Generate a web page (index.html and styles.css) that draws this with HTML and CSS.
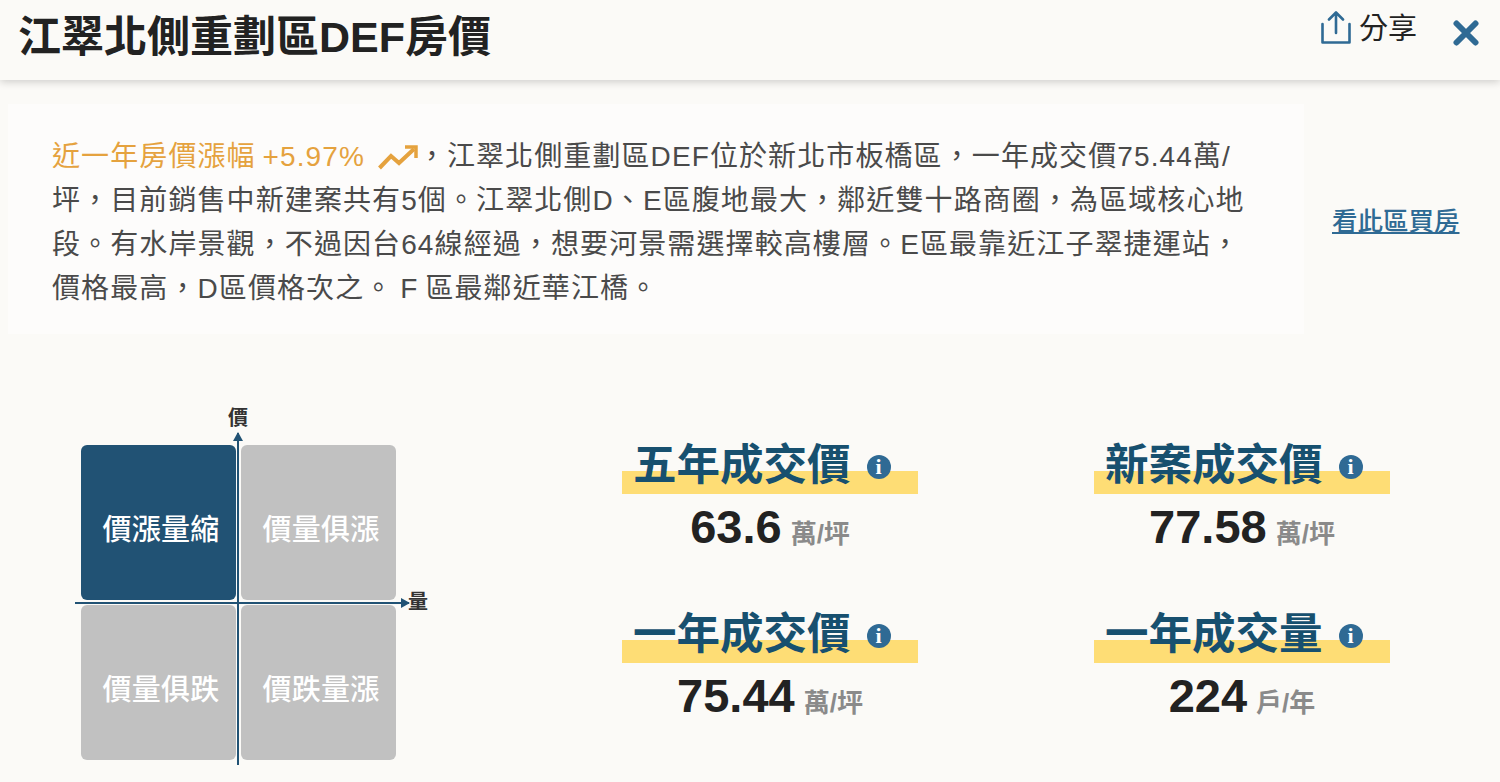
FILE: index.html
```html
<!DOCTYPE html>
<html lang="zh-Hant">
  <head>
    <meta charset="UTF-8">
    <meta name="viewport" content="width=device-width, initial-scale=1.0">
    <title>江翠北側重劃區DEF房價</title>
    <link rel="stylesheet" href="styles.css">
  </head>
  <body>
    <header class="top-bar">
      <h1>江翠北側重劃區DEF房價</h1>
      <div class="top-actions">
        <a class="share">
          <svg class="share-icon" viewBox="0 0 30 33" width="30" height="33" fill="none" stroke="#2f6a94" stroke-width="2.6" stroke-linecap="round" stroke-linejoin="round">
            <path d="M1.5 13V31.5H28.5V13"/>
            <path d="M15 22V1.8M8 8.5L15 1.5L22 8.5"/>
          </svg>
          <span>分享</span>
        </a>
        <svg class="close-icon" viewBox="0 0 26 26" width="26" height="26" fill="none" stroke="#2f6a94" stroke-width="6" stroke-linecap="round">
          <path d="M3.5 3.5L22.5 22.5M22.5 3.5L3.5 22.5"/>
        </svg>
      </div>
    </header>

    <section class="intro">
      <p class="intro-text">
        <span class="rise">近一年房價漲幅 +5.97%
          <svg class="rise-icon" viewBox="0 0 40 26" width="40" height="26" fill="none" stroke="#e5a23e" stroke-width="4">
            <path d="M1.5 24L13 12L21 19L36 5"/>
            <path d="M27 3H38V14" stroke-width="3.5"/>
          </svg></span>，江翠北側重劃區DEF位於新北市板橋區，一年成交價75.44萬/<br>坪，目前銷售中新建案共有5個。江翠北側D、E區腹地最大，鄰近雙十路商圈，為區域核心地<br>段。有水岸景觀，不過因台64線經過，想要河景需選擇較高樓層。E區最靠近江子翠捷運站，<br>價格最高，D區價格次之。 F 區最鄰近華江橋。
      </p>
      <a class="buy-link">看此區買房</a>
    </section>

    <main class="stats">
      <div class="quadrant">
        <span class="axis-label axis-y-label">價</span>
        <span class="axis-label axis-x-label">量</span>
        <div class="axis-y"></div>
        <div class="axis-x"></div>
        <div class="cell active">價漲量縮</div>
        <div class="cell">價量俱漲</div>
        <div class="cell">價量俱跌</div>
        <div class="cell">價跌量漲</div>
      </div>

      <div class="figures">
        <div class="figure">
          <div class="figure-title"><h2>五年成交價</h2><span class="info">i</span></div>
          <div class="figure-value"><b>63.6</b><small>萬/坪</small></div>
        </div>
        <div class="figure">
          <div class="figure-title"><h2>新案成交價</h2><span class="info">i</span></div>
          <div class="figure-value"><b>77.58</b><small>萬/坪</small></div>
        </div>
        <div class="figure">
          <div class="figure-title"><h2>一年成交價</h2><span class="info">i</span></div>
          <div class="figure-value"><b>75.44</b><small>萬/坪</small></div>
        </div>
        <div class="figure">
          <div class="figure-title"><h2>一年成交量</h2><span class="info">i</span></div>
          <div class="figure-value"><b>224</b><small>戶/年</small></div>
        </div>
      </div>
    </main>
  </body>
</html>
```
FILE: styles.css
```css
* {
  box-sizing: border-box;
}

html,
body {
  height: 100%;
}

body {
  margin: 0;
  overflow: hidden;
  font-family: "Liberation Sans", "Noto Sans CJK TC", sans-serif;
  background-color: #fbfaf7;
  color: #222;
}

.top-bar {
  height: 80px;
  padding: 0 20px 0 18px;
  display: flex;
  justify-content: space-between;
  align-items: flex-start;
  box-shadow: 0 2px 8px rgba(0, 0, 0, 0.18);
}

h1 {
  margin: 11px 0 0;
  font-size: 43px;
  line-height: 52px;
  font-weight: 700;
  color: #222;
}

.top-actions {
  display: flex;
  align-items: flex-start;
  margin-right: 1px;
}

.share {
  display: flex;
  align-items: flex-start;
  gap: 8px;
  margin-top: 11px;
  font-size: 29px;
  line-height: 36px;
  color: #222;
}

.close-icon {
  margin: 20px 0 0 36px;
}

.intro {
  margin: 24px 196px 0 8px;
  width: 1296px;
  height: 230px;
  padding: 31px 44px 0;
  background-color: #fdfcfb;
  position: relative;
}

.intro-text {
  margin: 0;
  font-size: 28px;
  line-height: 44px;
  letter-spacing: 1.1px;
  word-spacing: -2px;
  color: #4a4a4a;
  white-space: nowrap;
}

.rise {
  color: #e5a23e;
}

.rise-icon {
  margin-left: 6px;
  vertical-align: -4px;
}

.buy-link {
  position: absolute;
  left: 1324px;
  top: 100px;
  font-size: 25.5px;
  line-height: 34px;
  font-weight: 500;
  color: #2f6a94;
  text-decoration: underline;
  white-space: nowrap;
}

.stats {
  display: flex;
  align-items: flex-start;
  padding: 0 110px 0 81px;
}

.quadrant {
  position: relative;
  width: 315px;
  height: 315px;
  margin-top: 111px;
  flex-shrink: 0;
  display: grid;
  grid-template-columns: 155px 155px;
  grid-template-rows: 155px 155px;
  gap: 5px;
}

.cell {
  display: flex;
  align-items: center;
  justify-content: center;
  padding: 8px 0 0 5px;
  border-radius: 6px;
  background-color: #c1c1c1;
  color: #fff;
  font-size: 29px;
  font-weight: 500;
  letter-spacing: 0.3px;
}

.cell.active {
  background-color: #215274;
}

.axis-y {
  position: absolute;
  left: 156px;
  top: -12px;
  width: 2px;
  height: 332px;
  background-color: #215274;
}

.axis-y::before {
  content: "";
  position: absolute;
  left: -4px;
  top: -1px;
  border-left: 5px solid transparent;
  border-right: 5px solid transparent;
  border-bottom: 9px solid #215274;
}

.axis-x {
  position: absolute;
  left: -6px;
  top: 157px;
  width: 334px;
  height: 2px;
  background-color: #215274;
}

.axis-x::after {
  content: "";
  position: absolute;
  right: -1px;
  top: -4px;
  border-top: 5px solid transparent;
  border-bottom: 5px solid transparent;
  border-left: 9px solid #215274;
}

.axis-label {
  position: absolute;
  font-size: 20px;
  line-height: 22px;
  font-weight: 700;
  color: #333;
}

.axis-y-label {
  left: 147px;
  top: -38px;
}

.axis-x-label {
  left: 327px;
  top: 146px;
}

.figures {
  margin: 104px 0 0 226px;
  display: grid;
  grid-template-columns: 296px 296px;
  column-gap: 176px;
  row-gap: 27px;
}

.figure {
  height: 142px;
}

.figure-title {
  height: 66px;
  display: flex;
  align-items: center;
  padding-left: 11px;
  background: linear-gradient(#fbfaf7 0, #fbfaf7 33px, #fedd75 33px, #fedd75 56px, #fbfaf7 56px);
}

h2 {
  margin: 0;
  font-size: 43.5px;
  line-height: 50px;
  font-weight: 700;
  color: #17506f;
  position: relative;
  top: -6px;
}

.info {
  width: 24px;
  height: 24px;
  margin-left: 16px;
  border-radius: 50%;
  background-color: #2f6a94;
  color: #fff;
  font-family: "Liberation Serif", serif;
  font-size: 22px;
  line-height: 24px;
  font-weight: 700;
  text-align: center;
  position: relative;
  top: -4px;
}

.figure-value {
  display: flex;
  justify-content: center;
  align-items: baseline;
  gap: 9px;
  margin-top: -5px;
  line-height: 56px;
}

.figure-value b {
  font-size: 47px;
  color: #222;
}

.figure-value small {
  font-size: 26px;
  font-weight: 700;
  color: #8a8a8a;
}
```
